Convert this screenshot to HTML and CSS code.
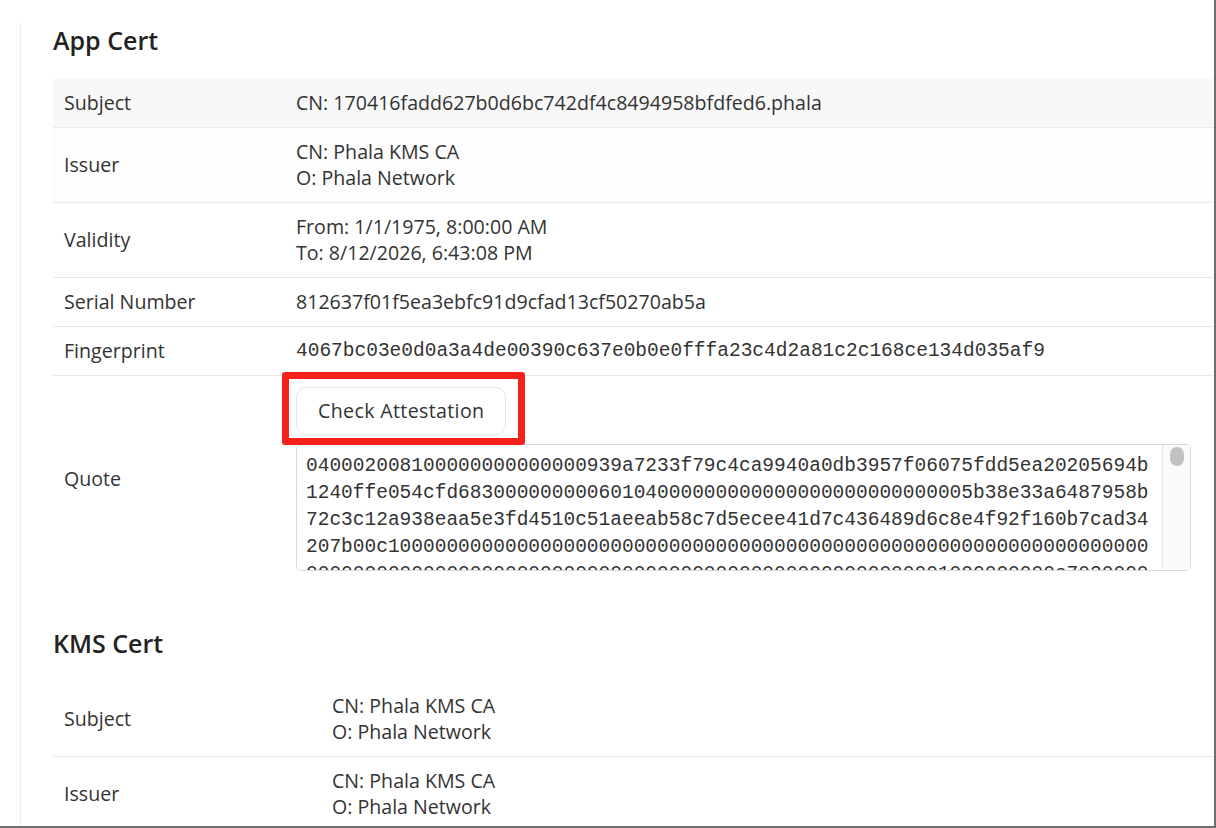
FILE: index.html
```html
<!DOCTYPE html>
<html lang="en">
<head>
<meta charset="utf-8">
<title>Certificates</title>
<link rel="stylesheet" href="styles.css">
</head>
<body>
<div class="frame">
  <div class="card">
    <section class="section">
      <h2 class="section-title">App Cert</h2>
      <div class="kv kv-app">
        <div class="row row-hover">
          <div class="label">Subject</div>
          <div class="value">CN: 170416fadd627b0d6bc742df4c8494958bfdfed6.phala</div>
        </div>
        <div class="row row-fade">
          <div class="label">Issuer</div>
          <div class="value">CN: Phala KMS CA<br>O: Phala Network</div>
        </div>
        <div class="row">
          <div class="label">Validity</div>
          <div class="value">From: 1/1/1975, 8:00:00 AM<br>To: 8/12/2026, 6:43:08 PM</div>
        </div>
        <div class="row">
          <div class="label">Serial Number</div>
          <div class="value">812637f01f5ea3ebfc91d9cfad13cf50270ab5a</div>
        </div>
        <div class="row">
          <div class="label">Fingerprint</div>
          <div class="value mono">4067bc03e0d0a3a4de00390c637e0b0e0fffa23c4d2a81c2c168ce134d035af9</div>
        </div>
        <div class="row row-last">
          <div class="label">Quote</div>
          <div class="value value-quote">
            <div class="btn-wrap">
              <button class="btn" type="button">Check Attestation</button>
              <span class="highlight"></span>
            </div>
            <div class="quote-box">
              <div class="quote-text">
                <div class="quote-line">040002008100000000000000939a7233f79c4ca9940a0db3957f06075fdd5ea20205694b</div>
                <div class="quote-line">1240ffe054cfd68300000000060104000000000000000000000000005b38e33a6487958b</div>
                <div class="quote-line">72c3c12a938eaa5e3fd4510c51aeeab58c7d5ecee41d7c436489d6c8e4f92f160b7cad34</div>
                <div class="quote-line">207b00c10000000000000000000000000000000000000000000000000000000000000000</div>
                <div class="quote-line">0000000000000000000000000000000000000000000000000000001000000000e7020000</div>
              </div>
              <div class="scrollbar"><div class="scroll-thumb"></div></div>
            </div>
          </div>
        </div>
      </div>
    </section>

    <section class="section">
      <h2 class="section-title">KMS Cert</h2>
      <div class="kv kv-kms">
        <div class="row">
          <div class="label">Subject</div>
          <div class="value">CN: Phala KMS CA<br>O: Phala Network</div>
        </div>
        <div class="row">
          <div class="label">Issuer</div>
          <div class="value">CN: Phala KMS CA<br>O: Phala Network</div>
        </div>
      </div>
    </section>
  </div>
</div>
</body>
</html>
```
FILE: styles.css
```css
* {
  box-sizing: border-box;
}

html,
body {
  margin: 0;
  padding: 0;
  background: #ffffff;
}

body {
  font-family: "Open Sans", "Noto Sans", sans-serif;
  color: #333333;
}

.frame {
  width: 1216px;
  height: 828px;
  border-right: 2px solid #6e6e6e;
  border-bottom: 2px solid #6e6e6e;
  overflow: hidden;
  background: #ffffff;
}

.card {
  margin-left: 20px;
  height: 100%;
  border-left: 1px solid #ececec;
  padding-left: 32px;
}

.section + .section {
  padding-top: 21px;
}

.section-title {
  margin: 23px 0 22px;
  font-size: 25px;
  line-height: 34px;
  font-weight: 600;
  color: #222222;
}

.row {
  display: grid;
  align-items: center;
  border-bottom: 1px solid #e9e9e9;
  font-size: 19.6px;
  line-height: 26px;
}

.kv-app .row {
  grid-template-columns: 243px 1fr;
}

.kv-kms .row {
  grid-template-columns: 279px 1fr;
}

.row-hover {
  background: #f8f8f8;
}

.row-fade {
  background: #fdfdfd;
}

.row-last {
  border-bottom: none;
}

.label {
  padding: 11px;
}

.value {
  padding: 11px 0;
}

.mono {
  font-family: "Liberation Mono", "DejaVu Sans Mono", monospace;
  font-size: 19.5px;
}

.value-quote {
  display: flex;
  flex-direction: column;
  align-items: flex-start;
  gap: 9px;
}

.btn-wrap {
  position: relative;
}

.btn {
  display: block;
  margin: 0;
  padding: 10px 21px;
  background: #ffffff;
  border: 1px solid #e6e6e6;
  border-radius: 10px;
  font-family: "Open Sans", "Noto Sans", sans-serif;
  font-size: 19.6px;
  line-height: 26px;
  font-weight: 500;
  letter-spacing: 0.35px;
  color: #333333;
}

.highlight {
  position: absolute;
  left: -14px;
  top: -15px;
  width: 243px;
  height: 73px;
  border: 7px solid #f5221b;
  border-radius: 3px;
  pointer-events: none;
}

.quote-box {
  display: flex;
  width: 895px;
  height: 127px;
  border: 1px solid #d6d9de;
  border-radius: 5px;
  overflow: hidden;
  background: #ffffff;
}

.quote-text {
  flex: 1;
  min-width: 0;
  padding: 8px 8px 0 9px;
  font-family: "Liberation Mono", "DejaVu Sans Mono", monospace;
  font-size: 19.5px;
  line-height: 27px;
  color: #333333;
  overflow: hidden;
}

.quote-line {
  white-space: nowrap;
  overflow: hidden;
}

.scrollbar {
  flex: none;
  width: 28px;
  padding: 2px 6px 0 7px;
  background: #fafafa;
  border-left: 1px solid #e8e8e8;
}

.scroll-thumb {
  height: 19px;
  border-radius: 8px;
  background: #c1c1c1;
}
```
